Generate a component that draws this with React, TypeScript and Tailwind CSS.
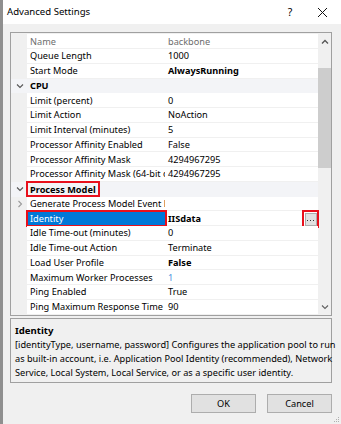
import React from "react";

type Row =
  | { kind: "cat"; name: string }
  | { kind: "prop"; name: string; value: string; bold?: boolean; gray?: boolean; blue?: boolean; sub?: boolean; selected?: boolean; button?: boolean };

const rows: Row[] = [
  { kind: "prop", name: "Name", value: "backbone", gray: true },
  { kind: "prop", name: "Queue Length", value: "1000" },
  { kind: "prop", name: "Start Mode", value: "AlwaysRunning", bold: true },
  { kind: "cat", name: "CPU" },
  { kind: "prop", name: "Limit (percent)", value: "0" },
  { kind: "prop", name: "Limit Action", value: "NoAction" },
  { kind: "prop", name: "Limit Interval (minutes)", value: "5" },
  { kind: "prop", name: "Processor Affinity Enabled", value: "False" },
  { kind: "prop", name: "Processor Affinity Mask", value: "4294967295" },
  { kind: "prop", name: "Processor Affinity Mask (64-bit option)", value: "4294967295" },
  { kind: "cat", name: "Process Model" },
  { kind: "prop", name: "Generate Process Model Event Log Entry", value: "", sub: true },
  { kind: "prop", name: "Identity", value: "IISdata", bold: true, selected: true, button: true },
  { kind: "prop", name: "Idle Time-out (minutes)", value: "0" },
  { kind: "prop", name: "Idle Time-out Action", value: "Terminate" },
  { kind: "prop", name: "Load User Profile", value: "False", bold: true },
  { kind: "prop", name: "Maximum Worker Processes", value: "1", blue: true },
  { kind: "prop", name: "Ping Enabled", value: "True" },
  { kind: "prop", name: "Ping Maximum Response Time (seconds)", value: "90" },
];

function ChevDown({ color = "#555" }: { color?: string }) {
  return (
    <svg width="8" height="6" viewBox="0 0 8 6">
      <path d="M1 1.5 L4 4.5 L7 1.5" fill="none" stroke={color} strokeWidth="1.1" />
    </svg>
  );
}
function ChevRight() {
  return (
    <svg width="6" height="8" viewBox="0 0 6 8">
      <path d="M1.5 1 L4.5 4 L1.5 7" fill="none" stroke="#9a9a9a" strokeWidth="1.1" />
    </svg>
  );
}
function ChevUp({ color = "#555" }: { color?: string }) {
  return (
    <svg width="8" height="6" viewBox="0 0 8 6">
      <path d="M1 4.5 L4 1.5 L7 4.5" fill="none" stroke={color} strokeWidth="1.3" />
    </svg>
  );
}

export default function App() {
  return (
    <div
      className="relative w-[341px] h-[424px] overflow-hidden bg-[#f0f0f0] border-l-[3px] border-[#8f8f8f] text-[#000] text-[9.2px] leading-none"
      style={{ fontFamily: '"Noto Sans", "Open Sans", sans-serif' }}
    >
      {/* Title bar */}
      <div className="h-[24px] bg-white flex items-center pl-[4px]">
        <span className="text-[9.6px] text-[#000]">Advanced Settings</span>
        <span className="ml-auto w-[12px] text-center text-[10.5px] mr-[21px]">?</span>
        <svg width="11" height="11" viewBox="0 0 11 11" className="mr-[13px]">
          <path d="M1 1 L10 10 M10 1 L1 10" stroke="#111" strokeWidth="1" />
        </svg>
      </div>

      <div className="pl-[7px]">
        {/* Property grid */}
        <div className="mt-[8px] w-[322px] h-[284px] border border-[#a0a0a0] bg-white flex">
          <div className="w-[307px] flex flex-col pt-[1.3px] bg-[#f0f0f0]">
            {rows.map((r, i) =>
              r.kind === "cat" ? (
                <div key={i} className="relative h-[14.75px] flex items-center bg-[#f3f4f7]">
                  <div className="w-[16px] flex justify-center pl-[1px]">
                    <ChevDown />
                  </div>
                  <span className="pl-[3px] font-bold">{r.name}</span>
                  {r.name === "Process Model" && (
                    <div className="absolute left-[15px] top-[-0.5px] w-[74px] h-[15.5px] border-2 border-[#e8101c]" />
                  )}
                </div>
              ) : (
                <div key={i} className="relative h-[14.75px] flex">
                  <div className="w-[16px] flex items-center justify-center pl-[2px]">
                    {r.sub && <ChevRight />}
                  </div>
                  <div
                    className={
                      "w-[138px] flex items-center pl-[3px] overflow-hidden whitespace-nowrap border-b border-[#f0f0f0] " +
                      (r.selected ? "bg-[#0078d7] text-white" : "bg-white " + (r.gray ? "text-[#6d6d6d]" : ""))
                    }
                  >
                    {r.name}
                  </div>
                  <div
                    className={
                      "flex-1 flex items-center pl-[3px] bg-white border-b border-[#f0f0f0] whitespace-nowrap overflow-hidden " +
                      (r.bold ? "font-bold " : "") +
                      (r.gray ? "text-[#6d6d6d]" : r.blue ? "text-[#4f95e0]" : "")
                    }
                  >
                    {r.value}
                  </div>
                  {r.selected && (
                    <div className="absolute left-[15px] top-[-1px] w-[141px] h-[17px] border-2 border-[#e8101c]" />
                  )}
                  {r.button && (
                    <div className="absolute left-[291px] top-[-1px] w-[17px] h-[18px] border-2 border-[#e8101c] flex items-center justify-center">
                      <div className="w-[12px] h-[13px] bg-[#e1e1e1] border border-[#adadad] flex items-end justify-center pb-[3px]">
                        <svg width="7" height="2" viewBox="0 0 7 2">
                          <rect x="0" y="0" width="1" height="1" fill="#333" />
                          <rect x="3" y="0" width="1" height="1" fill="#333" />
                          <rect x="6" y="0" width="1" height="1" fill="#333" />
                        </svg>
                      </div>
                    </div>
                  )}
                </div>
              )
            )}
          </div>
          {/* Scrollbar */}
          <div className="w-[13px] bg-[#f0f0f0] flex flex-col">
            <div className="h-[17px] flex items-center justify-center">
              <ChevUp />
            </div>
            <div className="mt-[18px] h-[100px] bg-[#cdcdcd]" />
            <div className="flex-1" />
            <div className="h-[17px] flex items-center justify-center">
              <ChevDown color="#606060" />
            </div>
          </div>
        </div>

        {/* Description */}
        <div className="mt-[2px] w-[322px] h-[65px] border border-[#a0a0a0] bg-[#f0f0f0] px-[4px] pt-[5px]">
          <div className="font-bold text-[9.6px] leading-[14px]">Identity</div>
          <div className="leading-[14px] whitespace-nowrap">
            [identityType, username, password] Configures the application pool to run
            <br />
            as built-in account, i.e. Application Pool Identity (recommended), Network
            <br />
            Service, Local System, Local Service, or as a specific user identity.
          </div>
        </div>

        {/* Buttons */}
        <div className="mt-[11px] w-[322px] flex justify-end gap-[11px]">
          <button className="w-[65px] h-[19px] bg-[#e1e1e1] border border-[#adadad] text-[9.2px] leading-none">OK</button>
          <button className="w-[65px] h-[19px] bg-[#e1e1e1] border border-[#adadad] text-[9.2px] leading-none">Cancel</button>
        </div>
      </div>

      {/* Size grip */}
      <svg width="8" height="8" viewBox="0 0 8 8" className="absolute right-[1px] bottom-[1px]">
        <rect x="6" y="2" width="1" height="1" fill="#b0b0b0" />
        <rect x="4" y="4" width="1" height="1" fill="#b0b0b0" />
        <rect x="6" y="4" width="1" height="1" fill="#b0b0b0" />
        <rect x="2" y="6" width="1" height="1" fill="#b0b0b0" />
        <rect x="4" y="6" width="1" height="1" fill="#b0b0b0" />
        <rect x="6" y="6" width="1" height="1" fill="#b0b0b0" />
      </svg>
    </div>
  );
}
